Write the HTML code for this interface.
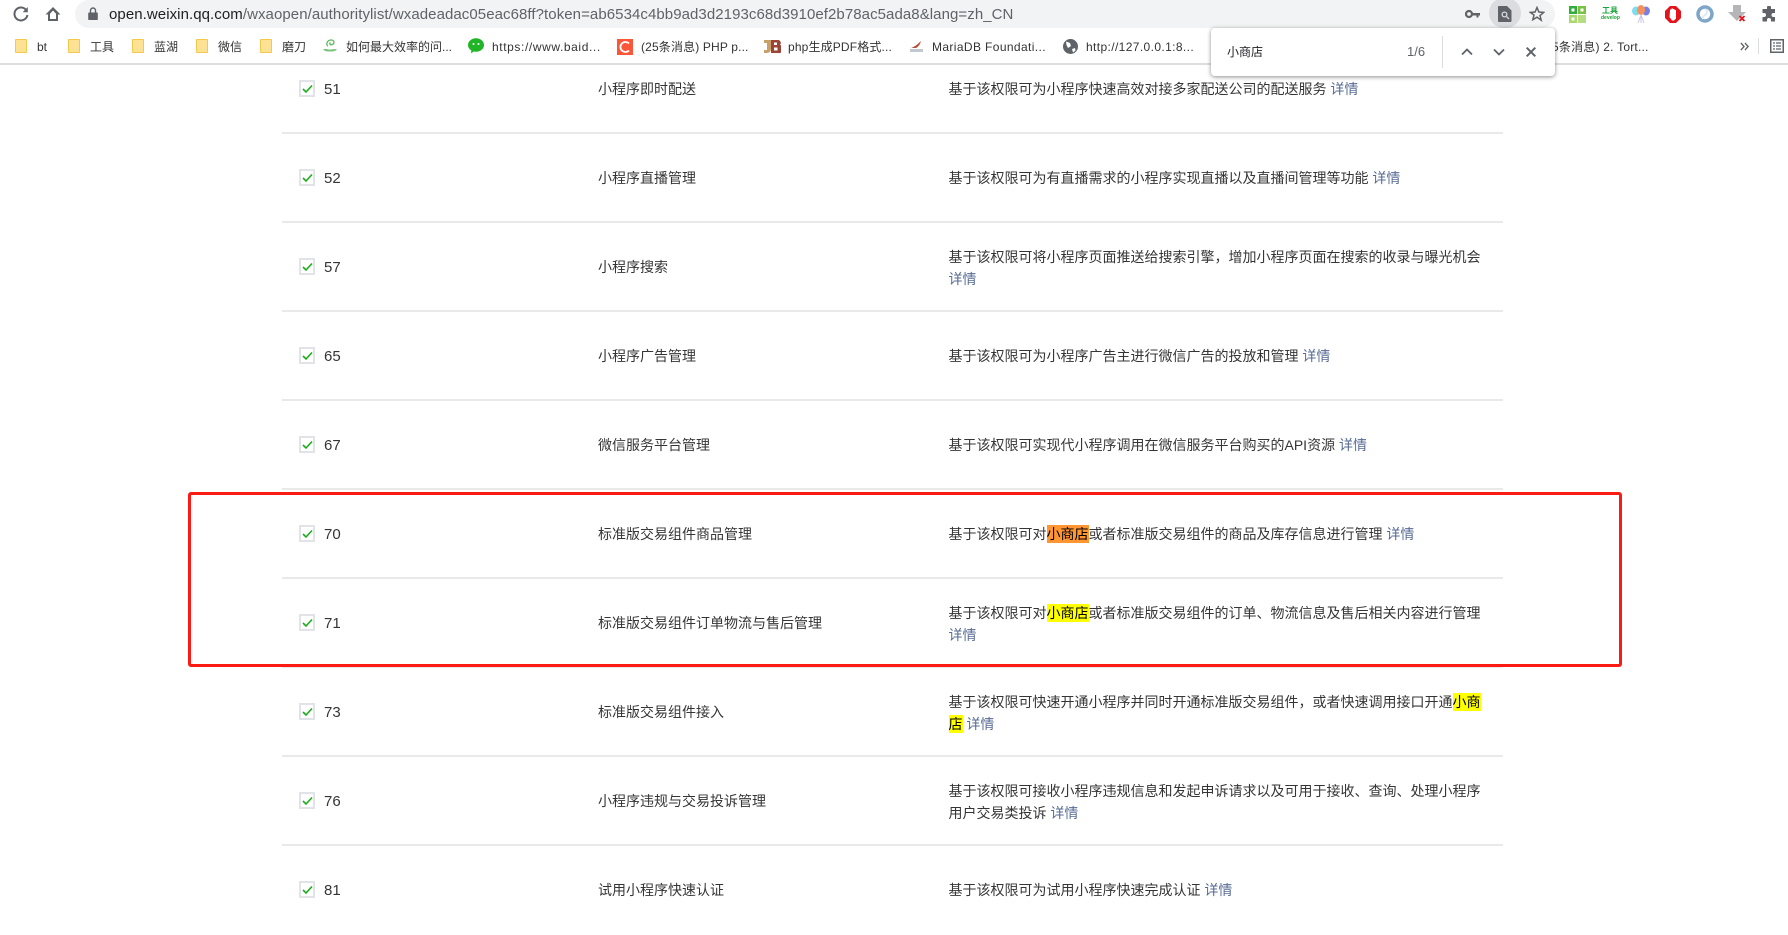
<!DOCTYPE html>
<html lang="zh-CN"><head><meta charset="utf-8"><title>authoritylist</title>
<style>
*{box-sizing:border-box}
html,body{margin:0;padding:0;width:1788px;height:930px;overflow:hidden;background:#fff;font-family:"Liberation Sans","Noto Sans CJK SC",sans-serif;color:#353535}
.a{position:absolute}
svg{position:absolute;display:block}
.bar{position:absolute;left:0;top:0;width:1788px;height:65px;background:#fff;border-bottom:2px solid #dedede}
.pill{position:absolute;left:75px;top:0;width:1480px;height:28px;background:#f1f3f4;border-radius:0 14px 14px 14px/0 14px 14px 14px;border-top-left-radius:14px}
.url{position:absolute;left:109px;top:5px;line-height:20px;font-size:15px;color:#5f6368;white-space:nowrap;letter-spacing:.07px}
.url b{font-weight:400;color:#202124}
.bm{position:absolute;top:39px;line-height:17px;font-size:12px;color:#333;white-space:nowrap}
.fold{position:absolute;top:39px;width:12px;height:14px;background:#fde293;border:1.5px solid #f2c94c;border-radius:1px}
.row{position:absolute;left:282px;width:1221px;height:90px;border-bottom:2px solid #e9e9e9}
.cb{position:absolute;left:17px;top:36px;width:16px;height:17px;border:2px solid #e2e3e8;background:#fff}
.num{position:absolute;left:42px;top:36px;line-height:19px;font-size:15px;color:#353535}
.name{position:absolute;left:316px;top:34px;line-height:22px;font-size:14px;color:#353535;white-space:nowrap}
.desc{position:absolute;left:666.500px;width:535px;line-height:22px;font-size:14px;color:#353535}
.one{top:34px}.two{top:24px}
.desc a{color:#576b95;text-decoration:none}
mark{background:#ff0;color:#000;padding:1px 0}
mark.o{background:#ff9632}
.find{position:absolute;left:1211px;top:28px;width:344px;height:48px;background:#fff;border-radius:4px;box-shadow:0 1px 4px rgba(0,0,0,.45);z-index:5}
.red{position:absolute;left:188px;top:492px;width:1434px;height:175px;border:3px solid #fb1a14;border-radius:3px;z-index:4}
</style></head><body>

<div class="row" style="top:44px"><div class="cb"><svg style="left:1px;top:2px" width="11" height="10" viewBox="0 0 11 10"><path d="M1 5l3 3 6-6.500" fill="none" stroke="#1aad19" stroke-width="1.600"/></svg></div><div class="num">51</div><div class="name">小程序即时配送</div><div class="desc one">基于该权限可为小程序快速高效对接多家配送公司的配送服务 <a>详情</a></div></div>
<div class="row" style="top:133px"><div class="cb"><svg style="left:1px;top:2px" width="11" height="10" viewBox="0 0 11 10"><path d="M1 5l3 3 6-6.500" fill="none" stroke="#1aad19" stroke-width="1.600"/></svg></div><div class="num">52</div><div class="name">小程序直播管理</div><div class="desc one">基于该权限可为有直播需求的小程序实现直播以及直播间管理等功能 <a>详情</a></div></div>
<div class="row" style="top:222px"><div class="cb"><svg style="left:1px;top:2px" width="11" height="10" viewBox="0 0 11 10"><path d="M1 5l3 3 6-6.500" fill="none" stroke="#1aad19" stroke-width="1.600"/></svg></div><div class="num">57</div><div class="name">小程序搜索</div><div class="desc two">基于该权限可将小程序页面推送给搜索引擎，增加小程序页面在搜索的收录与曝光机会 <a>详情</a></div></div>
<div class="row" style="top:311px"><div class="cb"><svg style="left:1px;top:2px" width="11" height="10" viewBox="0 0 11 10"><path d="M1 5l3 3 6-6.500" fill="none" stroke="#1aad19" stroke-width="1.600"/></svg></div><div class="num">65</div><div class="name">小程序广告管理</div><div class="desc one">基于该权限可为小程序广告主进行微信广告的投放和管理 <a>详情</a></div></div>
<div class="row" style="top:400px"><div class="cb"><svg style="left:1px;top:2px" width="11" height="10" viewBox="0 0 11 10"><path d="M1 5l3 3 6-6.500" fill="none" stroke="#1aad19" stroke-width="1.600"/></svg></div><div class="num">67</div><div class="name">微信服务平台管理</div><div class="desc one">基于该权限可实现代小程序调用在微信服务平台购买的API资源 <a>详情</a></div></div>
<div class="row" style="top:489px"><div class="cb"><svg style="left:1px;top:2px" width="11" height="10" viewBox="0 0 11 10"><path d="M1 5l3 3 6-6.500" fill="none" stroke="#1aad19" stroke-width="1.600"/></svg></div><div class="num">70</div><div class="name">标准版交易组件商品管理</div><div class="desc one">基于该权限可对<mark class="o">小商店</mark>或者标准版交易组件的商品及库存信息进行管理 <a>详情</a></div></div>
<div class="row" style="top:578px"><div class="cb"><svg style="left:1px;top:2px" width="11" height="10" viewBox="0 0 11 10"><path d="M1 5l3 3 6-6.500" fill="none" stroke="#1aad19" stroke-width="1.600"/></svg></div><div class="num">71</div><div class="name">标准版交易组件订单物流与售后管理</div><div class="desc two">基于该权限可对<mark>小商店</mark>或者标准版交易组件的订单、物流信息及售后相关内容进行管理 <a>详情</a></div></div>
<div class="row" style="top:667px"><div class="cb"><svg style="left:1px;top:2px" width="11" height="10" viewBox="0 0 11 10"><path d="M1 5l3 3 6-6.500" fill="none" stroke="#1aad19" stroke-width="1.600"/></svg></div><div class="num">73</div><div class="name">标准版交易组件接入</div><div class="desc two">基于该权限可快速开通小程序并同时开通标准版交易组件，或者快速调用接口开通<mark>小商店</mark> <a>详情</a></div></div>
<div class="row" style="top:756px"><div class="cb"><svg style="left:1px;top:2px" width="11" height="10" viewBox="0 0 11 10"><path d="M1 5l3 3 6-6.500" fill="none" stroke="#1aad19" stroke-width="1.600"/></svg></div><div class="num">76</div><div class="name">小程序违规与交易投诉管理</div><div class="desc two">基于该权限可接收小程序违规信息和发起申诉请求以及可用于接收、查询、处理小程序用户交易类投诉 <a>详情</a></div></div>
<div class="row" style="top:845px;border-bottom:0"><div class="cb"><svg style="left:1px;top:2px" width="11" height="10" viewBox="0 0 11 10"><path d="M1 5l3 3 6-6.500" fill="none" stroke="#1aad19" stroke-width="1.600"/></svg></div><div class="num">81</div><div class="name">试用小程序快速认证</div><div class="desc one">基于该权限可为试用小程序快速完成认证 <a>详情</a></div></div>

<div class="red"></div>

<div class="bar"></div>
<svg style="left:12px;top:5px" width="18" height="18" viewBox="0 0 18 18"><path d="M14.300 5.200A6.500 6.500 0 1 0 15.400 10" fill="none" stroke="#5f6368" stroke-width="2"/><path d="M15.800 2v5.200h-5.200z" fill="#5f6368"/></svg>
<svg style="left:44px;top:5px" width="18" height="18" viewBox="0 0 18 18"><path d="M9 2L1.500 9.500H4V16h10V9.500h2.500zM6 14V8.800L9 5.500l3 3.300V14z" fill="#5f6368" fill-rule="evenodd"/></svg>
<div class="pill"></div>
<svg style="left:88px;top:7px" width="10" height="13" viewBox="0 0 10 13"><path d="M1 5.500h8a.8.800 0 0 1 .8.800v5.900a.8.800 0 0 1-.8.800H1a.8.800 0 0 1-.8-.8V6.300a.8.800 0 0 1 .8-.8z" fill="#5f6368"/><path d="M2.500 6V3.500a2.500 2.500 0 0 1 5 0V6" fill="none" stroke="#5f6368" stroke-width="1.400"/></svg>
<div class="url"><b>open.weixin.qq.com</b>/wxaopen/authoritylist/wxadeadac05eac68ff?token=ab6534c4bb9ad3d2193c68d3910ef2b78ac5ada8&amp;lang=zh_CN</div>

<svg style="left:1465px;top:8px" width="16" height="12" viewBox="0 0 16 12"><circle cx="4" cy="6" r="3" fill="none" stroke="#5f6368" stroke-width="2.200"/><path d="M7 5h8v2.500h-1.500V9.500h-2V7.500H7z" fill="#5f6368"/></svg>
<div class="a" style="left:1489px;top:-2px;width:32px;height:30px;border-radius:16px;background:#dadce0"></div>
<svg style="left:1498px;top:6px" width="14" height="16" viewBox="0 0 14 16"><path d="M1 0h8l4.500 4.500V15a1 1 0 0 1-1 1H1a1 1 0 0 1-1-1V1a1 1 0 0 1 1-1z" fill="#5f6368"/><circle cx="6.500" cy="8.500" r="3" fill="#dadce0"/><circle cx="6.500" cy="8.500" r="1.700" fill="#5f6368"/><path d="M8.700 10.700l2.300 2.300" stroke="#dadce0" stroke-width="1.300"/></svg>
<svg style="left:1529px;top:6px" width="16" height="16" viewBox="0 0 16 16"><path d="M8 1.500l1.900 4.500 4.800.4-3.700 3.100 1.200 4.700L8 11.200l-4.200 2.500L5 9 1.300 6.400l4.800-.4z" fill="none" stroke="#5f6368" stroke-width="1.500"/></svg>

<svg style="left:1569px;top:6px" width="17" height="17" viewBox="0 0 17 17"><rect width="8" height="8" fill="#2fae3c"/><rect x="9" width="8" height="8" fill="#7ac143"/><rect y="9" width="8" height="8" fill="#a9d86e"/><rect x="9" y="9" width="8" height="8" fill="#b6dd84"/><rect x="2.500" y="2.500" width="3" height="3" fill="#fff"/><rect x="11.500" y="2.500" width="3" height="3" fill="#fff"/><rect x="2.500" y="11.500" width="3" height="3" fill="#fff"/></svg>
<div class="a" style="left:1602px;top:6px;width:18px;line-height:9px;font-size:8px;font-weight:700;color:#1aa53a;white-space:nowrap">工具</div>
<div class="a" style="left:1601px;top:15px;width:18px;line-height:6px;font-size:5px;font-weight:700;color:#1aa53a">develop</div>
<svg style="left:1632px;top:5px" width="18" height="19" viewBox="0 0 18 19"><ellipse cx="4" cy="6" rx="4" ry="4.500" fill="#7fdcec"/><ellipse cx="14" cy="6" rx="4" ry="4.500" fill="#7a7fe8"/><ellipse cx="9" cy="5" rx="4" ry="5" fill="#f4915c"/><path d="M9 10l-3 8M9 10l3 8M9 10v8" stroke="#c9c6ea" stroke-width="1"/></svg>
<svg style="left:1665px;top:6px" width="16" height="17" viewBox="0 0 16 17"><path d="M5 0h6l5 5v7l-5 5H5l-5-5V5z" fill="#e3151a"/><path d="M5 5V3.500h1.500v-1H8v.5h1.500V4H11v8.500L9 14.500H7L4.500 11z" fill="#fff"/></svg>
<svg style="left:1696px;top:5px" width="18" height="18" viewBox="0 0 18 18"><circle cx="9" cy="9" r="7" fill="none" stroke="#7fa6c9" stroke-width="3.500"/><path d="M9 4c3 2 2 5 0 6-2 1-3 3-2 4" fill="none" stroke="#dfeaf4" stroke-width="1.800"/></svg>
<svg style="left:1728px;top:5px" width="18" height="18" viewBox="0 0 18 18"><path d="M5 0h8v7h5l-9 9-9-9h5z" fill="#b4b6b8"/><path d="M11.500 11l5 5M16.500 11l-5 5" stroke="#e3151a" stroke-width="1.800"/></svg>
<svg style="left:1761px;top:6px" width="16" height="16" viewBox="0 0 16 16"><path d="M6 1.500a2 2 0 0 1 4 0V3h4v4h-1.500a2 2 0 0 0 0 4H14v4.500h-4V14a2 2 0 0 0-4 0v1.500H1.500V11H3a2 2 0 0 0 0-4H1.500V3H6z" fill="#5f6368"/></svg>

<div class="fold" style="left:15px"></div><div class="bm" style="left:37px">bt</div>
<div class="fold" style="left:68px"></div><div class="bm" style="left:90px">工具</div>
<div class="fold" style="left:132px"></div><div class="bm" style="left:154px">蓝湖</div>
<div class="fold" style="left:196px"></div><div class="bm" style="left:218px">微信</div>
<div class="fold" style="left:260px"></div><div class="bm" style="left:282px">磨刀</div>
<svg style="left:322px;top:38px" width="16" height="15" viewBox="0 0 16 15"><path d="M6 8C3.500 7 5 2 9 2c3 0 4 3 1.500 4.500-2 1-3.500-.5-2-2" fill="none" stroke="#5cb85c" stroke-width="1.300"/><path d="M1 11.500c3-1.500 4 0 7 0s4-1 7 0c-2 2-4 2-7 2s-5 0-7-2z" fill="#7bc47f"/></svg>
<div class="bm" style="left:346px">如何最大效率的问...</div>
<svg style="left:468px;top:38px" width="16" height="16" viewBox="0 0 16 16"><ellipse cx="8" cy="7" rx="8" ry="6.800" fill="#1fb527"/><path d="M3.500 11.500L3 15.500l4-3z" fill="#1fb527"/><circle cx="5.500" cy="6" r="1" fill="#fff"/><circle cx="10.500" cy="6" r="1" fill="#fff"/></svg>
<div class="bm" style="left:492px;letter-spacing:.6px">https://www.baid...</div>
<div class="a" style="left:617px;top:39px;width:16px;height:16px;background:#f9563a"></div>
<svg style="left:619px;top:41px" width="12" height="12" viewBox="0 0 12 12"><path d="M10 2.500A5 5 0 1 0 10 9.500" fill="none" stroke="#fff" stroke-width="1.800"/></svg>
<div class="bm" style="left:641px;letter-spacing:.15px">(25条消息) PHP p...</div>
<svg style="left:764px;top:39px" width="17" height="15" viewBox="0 0 17 15"><path d="M0 1h7v9a4 4 0 0 1-4 4H0v-3h3V4H0z" fill="#c9a06a"/><path d="M7 1h7a3 3 0 0 1 2 5 3.500 3.500 0 0 1-2 8H7zM10 3.500v2.500h3v-2.500zM10 8.500v3h3.500v-3z" fill="#9c4436" fill-rule="evenodd"/></svg>
<div class="bm" style="left:788px;letter-spacing:.15px">php生成PDF格式...</div>
<svg style="left:910px;top:40px" width="13" height="13" viewBox="0 0 13 13"><path d="M1 8c3-1 6-3 10-7-1 4-3 6-5 7z" fill="#b5503c"/><rect y="9" width="13" height="3" fill="#c2c7d0"/></svg>
<div class="bm" style="left:932px;letter-spacing:.38px">MariaDB Foundati...</div>
<svg style="left:1063px;top:39px" width="15" height="15" viewBox="0 0 15 15"><circle cx="7.500" cy="7.500" r="7.500" fill="#5f6368"/><path d="M3 2.500l4 1.500 1 3-3 2-1.500-3zM9 10l3-1 .5 2.500-2.500 2z" fill="#fff"/></svg>
<div class="bm" style="left:1086px;letter-spacing:.38px">http://127.0.0.1:8...</div>
<div class="bm" style="left:1552px;width:97px;overflow:hidden;direction:rtl;text-align:left;letter-spacing:.2px"><span style="direction:ltr;unicode-bidi:embed">5条消息) 2. Tort...</span></div>
<svg style="left:1740px;top:42px" width="9" height="9" viewBox="0 0 10 10"><path d="M1 1l3.500 4L1 9M5.500 1L9 5 5.500 9" fill="none" stroke="#5f6368" stroke-width="1.500"/></svg>
<div class="a" style="left:1758px;top:38px;width:1px;height:16px;background:#dadce0"></div>
<svg style="left:1770px;top:39px" width="14" height="14" viewBox="0 0 14 14"><rect x=".75" y=".75" width="12.500" height="12.500" fill="none" stroke="#5f6368" stroke-width="1.500"/><path d="M3 4h2M6 4h5M3 7h2M6 7h5M3 10h2M6 10h5" stroke="#5f6368" stroke-width="1.300"/></svg>

<div class="find">
<div class="a" style="left:16px;top:15px;line-height:18px;font-size:12px;color:#202124">小商店</div>
<div class="a" style="left:196px;top:15px;line-height:18px;font-size:13px;color:#5f6368">1/6</div>
<div class="a" style="left:231px;top:8px;width:1px;height:32px;background:#dadce0"></div>
<svg style="left:250px;top:20px" width="12" height="8" viewBox="0 0 12 8"><path d="M1 6.500l5-5 5 5" fill="none" stroke="#5f6368" stroke-width="1.800"/></svg>
<svg style="left:282px;top:20px" width="12" height="8" viewBox="0 0 12 8"><path d="M1 1.500l5 5 5-5" fill="none" stroke="#5f6368" stroke-width="1.800"/></svg>
<svg style="left:315px;top:19px" width="10" height="10" viewBox="0 0 10 10"><path d="M.7.700l8.600 8.600M9.300.700L.7 9.300" fill="none" stroke="#5f6368" stroke-width="2"/></svg>
</div>
</body></html>
